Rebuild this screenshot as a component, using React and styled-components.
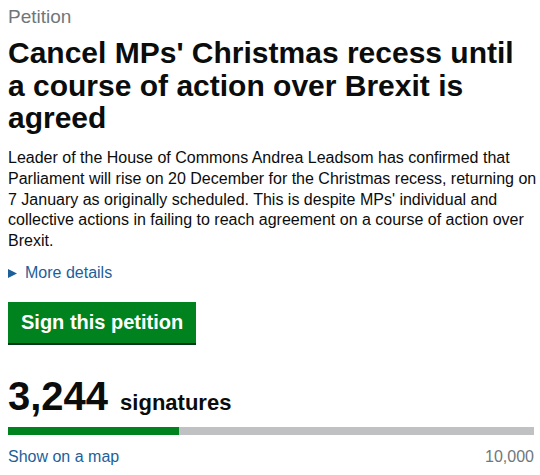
import React from "react";
import styled, { createGlobalStyle } from "styled-components";

const GlobalStyle = createGlobalStyle`
  html, body {
    margin: 0;
    padding: 0;
    background: #ffffff;
  }
  body {
    font-family: "Liberation Sans", Arial, sans-serif;
    color: #0b0c0c;
  }
`;

const Page = styled.main`
  width: 530px;
  padding: 5px 2px 0 8px;
`;

const Caption = styled.div`
  font-size: 19px;
  line-height: 24px;
  color: #6f777b;
`;

const Title = styled.h1`
  margin: 8px 0 0;
  max-width: 526px;
  font-size: 30px;
  line-height: 32.5px;
  font-weight: 700;
  color: #0b0c0c;
`;

const Lede = styled.p`
  margin: 13.5px 0 0;
  font-size: 16px;
  line-height: 20.8px;
`;

const Details = styled.div`
  margin-top: 11px;
  display: flex;
  align-items: center;
  gap: 8px;
  font-size: 16px;
  line-height: 20.8px;
  color: #1d5f9a;
`;

const SignButton = styled.button`
  display: block;
  margin-top: 18px;
  border: 0;
  border-radius: 0;
  background: #00821e;
  box-shadow: 0 2px 0 #003618;
  color: #ffffff;
  font-family: inherit;
  font-size: 20px;
  line-height: 24px;
  font-weight: 700;
  padding: 8px 13px 9px;
  cursor: pointer;
`;

const Count = styled.div`
  margin-top: 33px;
  width: 526px;
  display: flex;
  align-items: baseline;
  gap: 12px;
  font-weight: 700;
`;

const Number = styled.span`
  font-size: 40px;
  line-height: 40px;
`;

const Unit = styled.span`
  font-size: 22px;
  line-height: 22px;
`;

const Track = styled.div`
  margin-top: 11px;
  width: 526px;
  height: 8px;
  background: #bfc1c3;
`;

const Fill = styled.div`
  height: 100%;
  background: #00821e;
`;

const Foot = styled.div`
  margin-top: 12px;
  width: 526px;
  display: flex;
  justify-content: space-between;
  font-size: 16px;
  line-height: 20.8px;
`;

const MapLink = styled.a`
  color: #1d5f9a;
  text-decoration: none;
`;

const Target = styled.span`
  color: #6f777b;
`;

const signatures = 3244;
const goal = 10000;

export default function App() {
  return (
    <>
      <GlobalStyle />
      <Page>
        <Caption>Petition</Caption>
        <Title>Cancel MPs' Christmas recess until a course of action over Brexit is agreed</Title>
        <Lede>
          Leader of the House of Commons Andrea Leadsom has confirmed that Parliament will rise on 20
          December for the Christmas recess, returning on 7 January as originally scheduled. This is
          despite MPs' individual and collective actions in failing to reach agreement on a course of
          action over Brexit.
        </Lede>
        <Details>
          <svg width="9" height="9" viewBox="0 0 9 9">
            <polygon points="0,0 9,4.5 0,9" fill="#1d5f9a" />
          </svg>
          More details
        </Details>
        <SignButton>Sign this petition</SignButton>
        <Count>
          <Number>3,244</Number>
          <Unit>signatures</Unit>
        </Count>
        <Track>
          <Fill style={{ width: `${(signatures / goal) * 100}%` }} />
        </Track>
        <Foot>
          <MapLink href="#">Show on a map</MapLink>
          <Target>10,000</Target>
        </Foot>
      </Page>
    </>
  );
}
